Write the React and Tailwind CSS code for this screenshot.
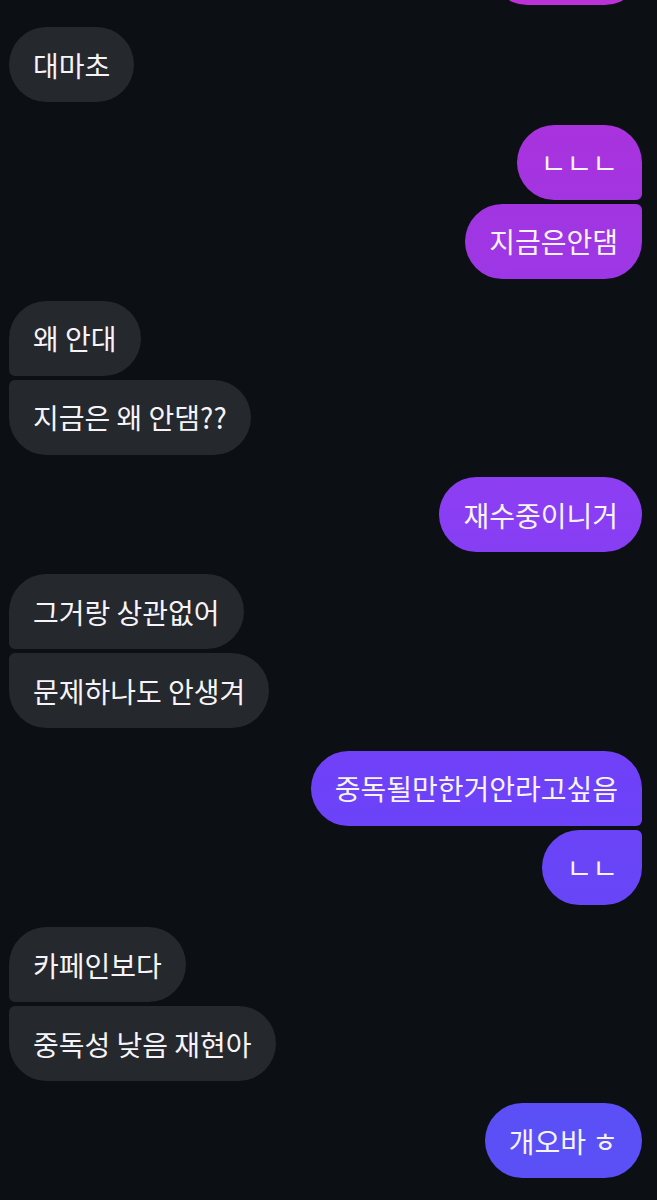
const messages = [
  { group: 0, me: true, text: '', width: 'w-[152px]' },
  { group: 1, me: false, text: '대마초' },
  { group: 2, me: true, text: 'ㄴㄴㄴ' },
  { group: 2, me: true, text: '지금은안댐' },
  { group: 3, me: false, text: '왜 안대' },
  { group: 3, me: false, text: '지금은 왜 안댐??' },
  { group: 4, me: true, text: '재수중이니거' },
  { group: 5, me: false, text: '그거랑 상관없어' },
  { group: 5, me: false, text: '문제하나도 안생겨' },
  { group: 6, me: true, text: '중독될만한거안라고싶음' },
  { group: 6, me: true, text: 'ㄴㄴ' },
  { group: 7, me: false, text: '카페인보다' },
  { group: 7, me: false, text: '중독성 낮음 재현아' },
  { group: 8, me: true, text: '개오바 ㅎ' },
]

const mine =
  'bg-fixed bg-[linear-gradient(to_bottom,#bc32d6_0%,#a733de_12%,#8b3ef3_42%,#6e41f8_65%,#5a50f6_95%)]'

function cornerClass(me, first, last) {
  if (first && last) return 'rounded-[38px]'
  if (me) return first ? 'rounded-[38px] rounded-br-[6px]' : 'rounded-[38px] rounded-tr-[6px]'
  return first ? 'rounded-[38px] rounded-bl-[6px]' : 'rounded-[38px] rounded-tl-[6px]'
}

function Bubble({ msg, first, last, index }) {
  const spacing = index === 0 ? '-mt-[70px]' : first ? 'mt-[22.3px]' : 'mt-1'
  return (
    <div className={`flex ${msg.me ? 'justify-end' : 'justify-start'} ${spacing}`}>
      <div
        className={`flex h-[75px] items-center whitespace-pre px-6 text-[28px] leading-[36px] text-[#f6f4f8] ${
          msg.width ?? ''
        } ${cornerClass(msg.me, first, last)} ${msg.me ? mine : 'bg-[#25282d]'}`}
      >
        {msg.text}
      </div>
    </div>
  )
}

export default function App() {
  return (
    <div
      className="h-[1200px] w-full overflow-hidden bg-[#0c0f14] pl-[9px] pr-[15px]"
      style={{ fontFamily: '"Noto Sans CJK KR", "Noto Sans", sans-serif' }}
    >
      {messages.map((msg, i) => {
        const prev = messages[i - 1]
        const next = messages[i + 1]
        const first = !prev || prev.group !== msg.group
        const last = !next || next.group !== msg.group
        return <Bubble key={i} msg={msg} index={i} first={first} last={last} />
      })}
    </div>
  )
}
